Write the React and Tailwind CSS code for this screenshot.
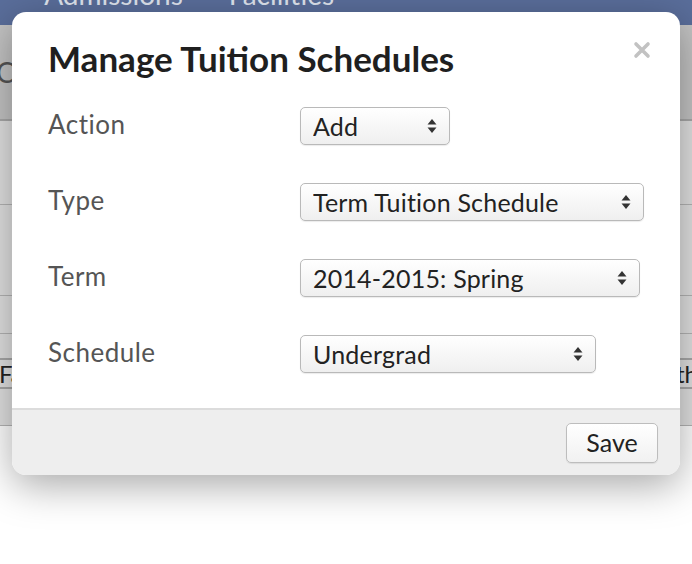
import React, { useState } from "react";

const font = { fontFamily: "Lato, 'Open Sans', Arial, sans-serif" };

function Arrows() {
  return (
    <svg width="10" height="16" viewBox="0 0 10 16" className="text-[#333]">
      <path d="M5 1 L9.5 6.5 L0.5 6.5 Z" fill="currentColor" />
      <path d="M5 15 L9.5 9.5 L0.5 9.5 Z" fill="currentColor" />
    </svg>
  );
}

function Select({ width, value, options, onChange }) {
  return (
    <div className={`relative h-[38px] ${width}`}>
      <select
        value={value}
        onChange={(e) => onChange(e.target.value)}
        className="h-full w-full appearance-none rounded-[5px] border-[1.5px] border-[#b9b9b9] bg-gradient-to-b from-white to-[#efefef] pb-[3px] pl-[12px] pr-8 text-[25px] tracking-[0.2px] text-[#222] shadow-[0_1px_1px_rgba(0,0,0,0.08)] outline-none"
      >
        {options.map((o) => (
          <option key={o}>{o}</option>
        ))}
      </select>
      <span className="pointer-events-none absolute right-[13px] top-1/2 -translate-y-1/2">
        <Arrows />
      </span>
    </div>
  );
}

function App() {
  const [action, setAction] = useState("Add");
  const [type, setType] = useState("Term Tuition Schedule");
  const [term, setTerm] = useState("2014-2015: Spring");
  const [schedule, setSchedule] = useState("Undergrad");

  const rows = [
    { label: "Action", width: "w-[150px]", value: action, set: setAction, options: ["Add", "Remove"] },
    { label: "Type", width: "w-[344px]", value: type, set: setType, options: ["Term Tuition Schedule", "Course Fee Schedule"] },
    { label: "Term", width: "w-[340px]", value: term, set: setTerm, options: ["2014-2015: Fall", "2014-2015: Spring"] },
    { label: "Schedule", width: "w-[296px]", value: schedule, set: setSchedule, options: ["Undergrad", "Graduate"] },
  ];

  return (
    <div className="relative h-[564px] w-[692px] overflow-hidden bg-white" style={font}>
      {/* page behind the dialog */}
      <div className="flex h-[25px] items-end overflow-hidden bg-[#5a6e9b] text-[28px] leading-none text-[#dfe4ee]">
        <span className="-ml-[12px] mb-[17px]">s</span>
        <span className="mb-[17px] ml-[44px]">Admissions</span>
        <span className="mb-[17px] ml-[46px]">Facilities</span>
      </div>
      <div className="flex h-[94px] items-center bg-[#c4c4c4] text-[28px] text-[#555]">
        <span className="-ml-[4px]">C</span>
      </div>
      <div className="bg-[#e2e2e2]">
        <div className="h-[85px] border-t-2 border-[#a9a9a9]" />
        <div className="h-[91px] border-t border-[#b5b5b5]" />
        <div className="h-[38px] border-t border-[#b5b5b5]" />
        <div className="h-[25px] border-t border-[#b5b5b5]" />
        <div className="flex h-[29px] items-center justify-between border-t-2 border-[#a9a9a9] text-[24px] text-[#222]">
          <span className="-ml-[1px]">Fa</span>
          <span className="-mr-[6px]">th</span>
        </div>
        <div className="h-[38px] border-t-2 border-[#a9a9a9]" />
      </div>
      <div className="h-px bg-[#b5b5b5]" />

      {/* dialog */}
      <div className="absolute left-[12px] top-[12px] flex h-[463px] w-[668px] flex-col overflow-hidden rounded-[14px] bg-white shadow-[0_10px_40px_rgba(0,0,0,0.35)]">
        <div className="relative flex-1 pl-[36px] pt-[27px]">
          <h1 className="text-[35px] font-bold leading-[38px] text-[#1f1f1f]">Manage Tuition Schedules</h1>
          <button className="absolute right-[29px] top-[29px] text-[#c2c2c2]">
            <svg width="18" height="18" viewBox="0 0 18 18">
              <path d="M3 3 L15 15 M15 3 L3 15" stroke="currentColor" strokeWidth="3.6" strokeLinecap="round" />
            </svg>
          </button>
          <div className="mt-[30px] grid grid-cols-[252px_auto] items-center gap-y-[38px]">
            {rows.map((r) => (
              <React.Fragment key={r.label}>
                <span className="-mt-[3px] text-[26px] tracking-[0.5px] text-[#555]">{r.label}</span>
                <Select width={r.width} value={r.value} options={r.options} onChange={r.set} />
              </React.Fragment>
            ))}
          </div>
        </div>
        <div className="flex h-[67px] items-center justify-end border-t-2 border-[#dcdcdc] bg-[#eeeeee] pr-[22px]">
          <button className="h-[40px] w-[92px] rounded-[5px] border-[1.5px] border-[#bdbdbd] bg-gradient-to-b from-white to-[#f1f1f1] pb-[2px] text-[25px] text-[#222] shadow-[0_1px_1px_rgba(0,0,0,0.08)]">
            Save
          </button>
        </div>
      </div>
    </div>
  );
}

export default App;
